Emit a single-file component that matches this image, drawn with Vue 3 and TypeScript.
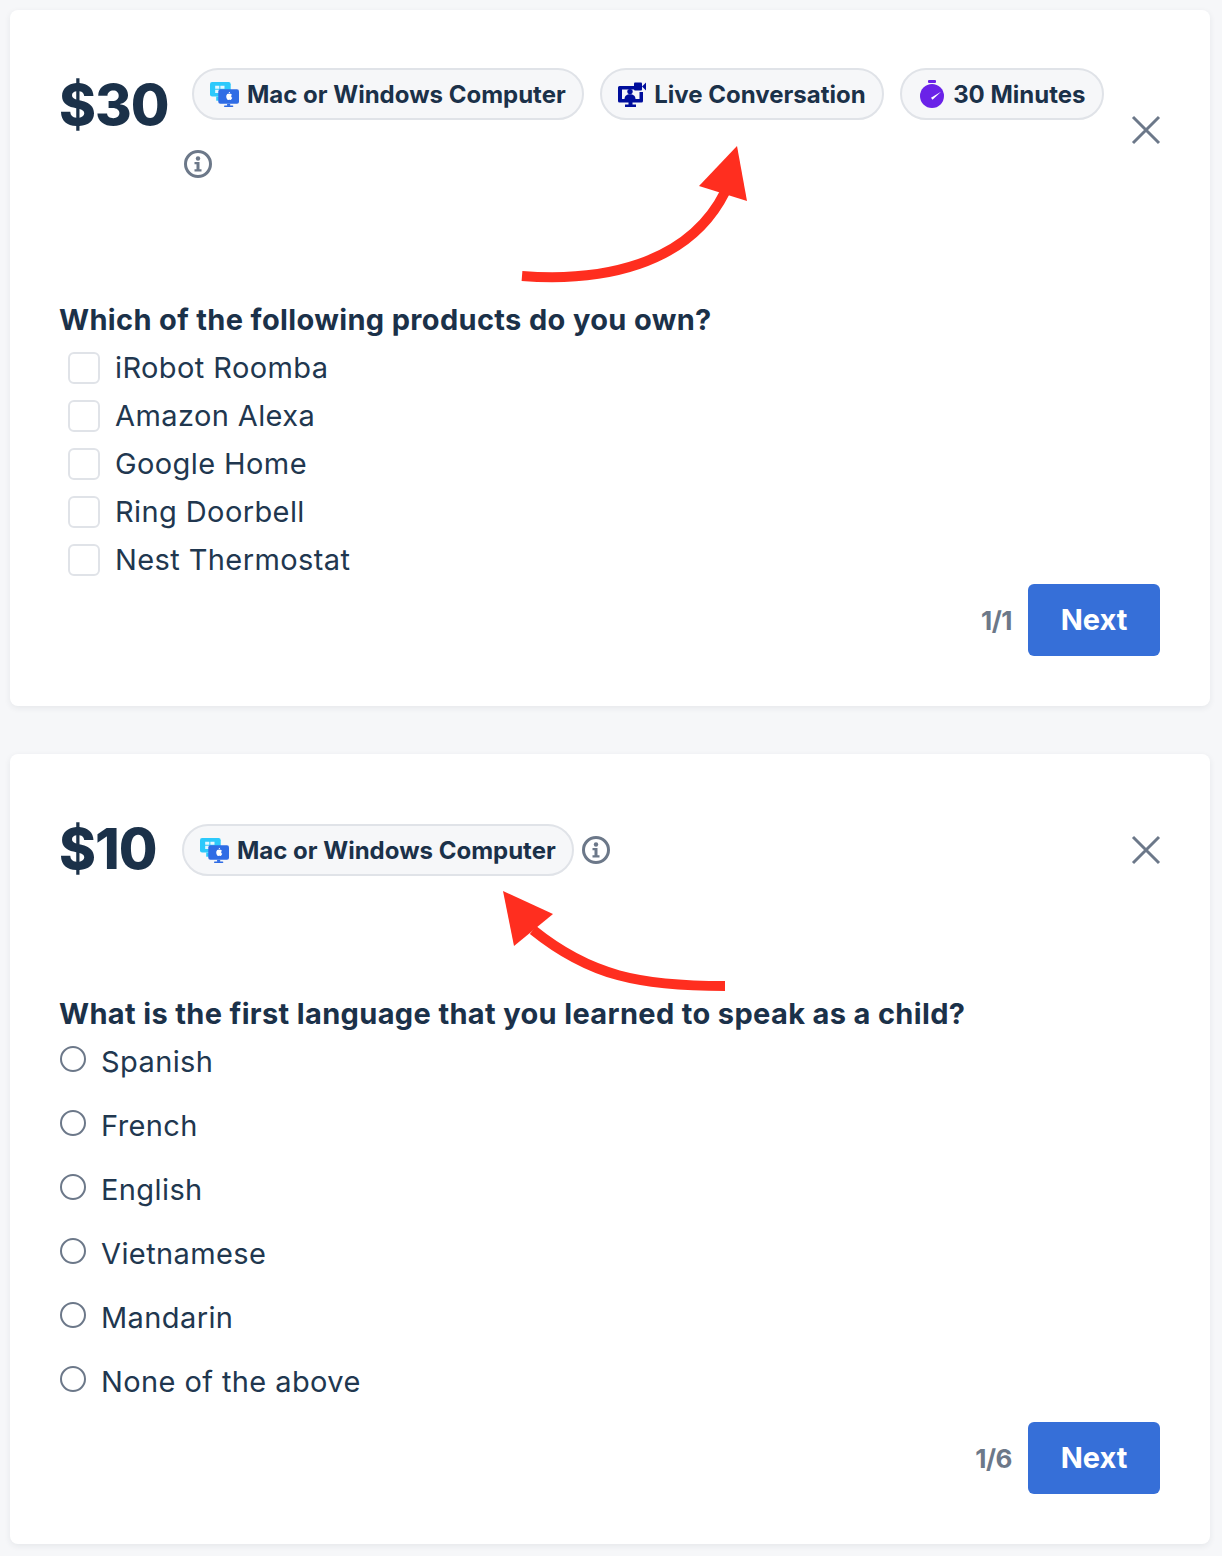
<script setup lang="ts">
const firstOptions: string[] = ['iRobot Roomba', 'Amazon Alexa', 'Google Home', 'Ring Doorbell', 'Nest Thermostat']
const secondOptions: string[] = ['Spanish', 'French', 'English', 'Vietnamese', 'Mandarin', 'None of the above']
</script>

<template>
  <main class="page">
    <section class="card card-one">
      <header class="head head-one">
        <div class="price">$30</div>
        <div class="tags">
          <span class="pill">
            <svg class="ico" width="29" height="25" viewBox="0 0 28 24">
              <rect x="0" y="0" width="20" height="14" rx="2" fill="#2cc9fb" />
              <rect x="6" y="14" width="6" height="4" fill="#2cc9fb" />
              <path d="M5 3.500h4v3H5zM10 3.500h4v3h-4zM5 7.500h4v3H5z" fill="#e4f8ff" />
              <rect x="8" y="7" width="20" height="14" rx="2" fill="#2f6ce5" />
              <rect x="16.500" y="21" width="3" height="2" fill="#2f6ce5" />
              <rect x="13.500" y="22.500" width="9" height="1.500" rx=".7" fill="#2f6ce5" />
              <path d="M18 11.500c.8-.5 2.600-.6 3.200.8-1.100.7-1 2.400.3 2.900-.4 1.100-1.200 2.300-2 2.100-.7-.3-1-.3-1.700 0-1.200.2-2.800-3.100-1.800-4.900.5-1 1.300-1.200 2-.9zM18 11.100c0-.9.600-1.500 1.400-1.700.1.900-.6 1.600-1.400 1.700z" fill="#fff" />
            </svg>
            Mac or Windows Computer
          </span>
          <span class="pill">
            <svg class="ico" width="28" height="25" viewBox="0 0 28 25">
              <path d="M1.500 4H16v3.500H4v9.500h17.500v-7H25v9a1.500 1.500 0 0 1-1.500 1.500H14.500v2h3.500V25H7v-2.500H10.500v-2h-9A1.500 1.500 0 0 1 0 19V5.500A1.500 1.500 0 0 1 1.500 4z" fill="#000e9c" />
              <circle cx="12" cy="9.600" r="2.700" fill="#000e9c" />
              <path d="M6.500 17c0-3.200 2.400-4.800 5.500-4.800s5.500 1.600 5.500 4.800z" fill="#000e9c" />
              <rect x="16" y="0.500" width="8" height="8" rx="1" fill="#000e9c" />
              <path d="M24 4.500l4-4v8z" fill="#000e9c" />
            </svg>
            Live Conversation
          </span>
          <span class="pill">
            <svg class="ico watch" width="24" height="28" viewBox="0 0 24 28">
              <rect x="8" y="0" width="8" height="3" rx="1" fill="#6a22e8" />
              <circle cx="12" cy="16" r="12" fill="#6a22e8" />
              <path d="M11 17.800l10-6-8.500 8z" fill="#fff" />
            </svg>
            30 Minutes
          </span>
          <svg class="info" width="28" height="28" viewBox="0 0 28 28">
            <circle cx="14" cy="14" r="12.500" fill="none" stroke="#6c7889" stroke-width="3" />
            <circle cx="14" cy="8.500" r="2.200" fill="#6c7889" />
            <path d="M10.500 12h5v7.300h2v2.200h-7v-2.200h2v-5h-2z" fill="#6c7889" />
          </svg>
        </div>
        <svg class="close" width="30" height="30" viewBox="0 0 30 30">
          <path d="M2 2l26 26M28 2L2 28" stroke="#6c7889" stroke-width="3" fill="none" />
        </svg>
      </header>

      <h2 class="question q-one">Which of the following products do you own?</h2>
      <ul class="checks">
        <li v-for="option in firstOptions" :key="option" class="check-row">
          <span class="box"></span>
          <span class="label">{{ option }}</span>
        </li>
      </ul>
      <footer class="foot">
        <span class="count">1/1</span>
        <button class="next" type="button">Next</button>
      </footer>

      <svg class="arrow" width="1200" height="696" viewBox="10 10 1200 696">
        <path d="M522 276C600 282 688 266 725 192" fill="none" stroke="#ff2e1f" stroke-width="10" />
        <path d="M737 146L699 186L747 201z" fill="#ff2e1f" />
      </svg>
    </section>

    <section class="card card-two">
      <header class="head head-two">
        <div class="price">$10</div>
        <div class="tags tags-two">
          <span class="pill">
            <svg class="ico" width="29" height="25" viewBox="0 0 28 24">
              <rect x="0" y="0" width="20" height="14" rx="2" fill="#2cc9fb" />
              <rect x="6" y="14" width="6" height="4" fill="#2cc9fb" />
              <path d="M5 3.500h4v3H5zM10 3.500h4v3h-4zM5 7.500h4v3H5z" fill="#e4f8ff" />
              <rect x="8" y="7" width="20" height="14" rx="2" fill="#2f6ce5" />
              <rect x="16.500" y="21" width="3" height="2" fill="#2f6ce5" />
              <rect x="13.500" y="22.500" width="9" height="1.500" rx=".7" fill="#2f6ce5" />
              <path d="M18 11.500c.8-.5 2.600-.6 3.200.8-1.100.7-1 2.400.3 2.900-.4 1.100-1.200 2.300-2 2.100-.7-.3-1-.3-1.700 0-1.200.2-2.800-3.100-1.800-4.900.5-1 1.300-1.200 2-.9zM18 11.100c0-.9.600-1.500 1.400-1.700.1.900-.6 1.600-1.400 1.700z" fill="#fff" />
            </svg>
            Mac or Windows Computer
          </span>
          <svg class="info info-inline" width="28" height="28" viewBox="0 0 28 28">
            <circle cx="14" cy="14" r="12.500" fill="none" stroke="#6c7889" stroke-width="3" />
            <circle cx="14" cy="8.500" r="2.200" fill="#6c7889" />
            <path d="M10.500 12h5v7.300h2v2.200h-7v-2.200h2v-5h-2z" fill="#6c7889" />
          </svg>
        </div>
        <svg class="close" width="30" height="30" viewBox="0 0 30 30">
          <path d="M2 2l26 26M28 2L2 28" stroke="#6c7889" stroke-width="3" fill="none" />
        </svg>
      </header>

      <h2 class="question q-two">What is the first language that you learned to speak as a child?</h2>
      <ul class="radios">
        <li v-for="option in secondOptions" :key="option" class="radio-row">
          <span class="dot"></span>
          <span class="label">{{ option }}</span>
        </li>
      </ul>
      <footer class="foot foot-two">
        <span class="count">1/6</span>
        <button class="next" type="button">Next</button>
      </footer>

      <svg class="arrow" width="1200" height="790" viewBox="10 754 1200 790">
        <path d="M725 986C640 986 590 976 533 930" fill="none" stroke="#ff2e1f" stroke-width="10" />
        <path d="M503 891L553 914L514 946z" fill="#ff2e1f" />
      </svg>
    </section>
  </main>
</template>

<style scoped>
.page {
  display: flex;
  flex-direction: column;
  gap: 48px;
  padding: 10px 12px 12px 10px;
  font-family: Inter, Lato, sans-serif;
  color: #1b3149;
}
.card {
  position: relative;
  background: #fff;
  border-radius: 8px;
  box-shadow: 0 2px 6px rgba(40, 50, 70, 0.08);
  padding: 50px 50px 50px 49px;
  box-sizing: border-box;
}
.card-one { height: 696px; }
.card-two { height: 790px; }
.head { display: flex; align-items: flex-start; position: relative; }
.head-one { height: 140px; }
.head-two { height: 92px; align-items: center; }
.price {
  font-size: 56px;
  font-weight: 800;
  line-height: 70px;
  width: 125px;
  flex: none;
  letter-spacing: -1px;
}
.head-one .price { margin-top: 10px; }
.head-two .price { width: 115px; margin-top: -2px; }
.tags {
  display: flex;
  flex-wrap: wrap;
  align-items: center;
  gap: 30px 16px;
  width: 940px;
  padding: 8px 0 0 8px;
  box-sizing: border-box;
}
.tags-two { padding: 0 0 0 8px; gap: 8px; width: auto; flex: 1; }
.pill {
  display: inline-flex;
  align-items: center;
  gap: 8px;
  height: 52px;
  box-sizing: border-box;
  padding: 0 16.5px 0 16px;
  border: 2px solid #e0e3e8;
  border-radius: 26px;
  background: #f6f7f9;
  font-size: 24px;
  font-weight: 700;
  white-space: nowrap;
}
.ico { flex: none; }
.watch { margin: 0 1px 0 2px; }
.info { flex: none; margin-left: -8px; }
.info-inline { margin-left: 0; }
.close { position: absolute; right: -1px; top: 55px; }
.head-two .close { top: 31px; }
.question {
  margin: 0;
  font-size: 29px;
  font-weight: 700;
  line-height: 40px;
  letter-spacing: 0.35px;
}
.q-one { margin-top: 100px; }
.q-two { margin-top: 98px; }
ul { list-style: none; margin: 0; padding: 0; }
.checks { margin-top: 4px; }
.check-row {
  display: flex;
  align-items: center;
  height: 48px;
  padding-left: 9px;
  gap: 15px;
}
.box {
  width: 32px;
  height: 32px;
  box-sizing: border-box;
  border: 2px solid #e0e3e8;
  border-radius: 6px;
  background: #fff;
}
.label { font-size: 29px; font-weight: 400; color: #21374f; letter-spacing: 0.4px; margin-top: -2px; }
.radios { margin-top: -4px; }
.radio-row {
  display: flex;
  align-items: center;
  height: 64px;
  padding-left: 1px;
  gap: 15px;
}
.dot {
  width: 26px;
  height: 26px;
  box-sizing: border-box;
  border: 2px solid #6c7889;
  border-radius: 50%;
  margin-top: -6px;
}
.foot {
  display: flex;
  justify-content: flex-end;
  align-items: center;
  gap: 16px;
}
.foot-two { margin-top: 8px; }
.count { font-size: 26px; font-weight: 700; color: #6c7889; letter-spacing: -0.5px; }
.next {
  width: 132px;
  height: 72px;
  border: none;
  border-radius: 6px;
  background: #366fd8;
  color: #fff;
  font-family: inherit;
  font-size: 29px;
  font-weight: 700;
  padding-bottom: 2px;
}
.arrow { position: absolute; left: 0; top: 0; pointer-events: none; }
</style>

<style>
body { background: #f6f7f9; }
</style>
